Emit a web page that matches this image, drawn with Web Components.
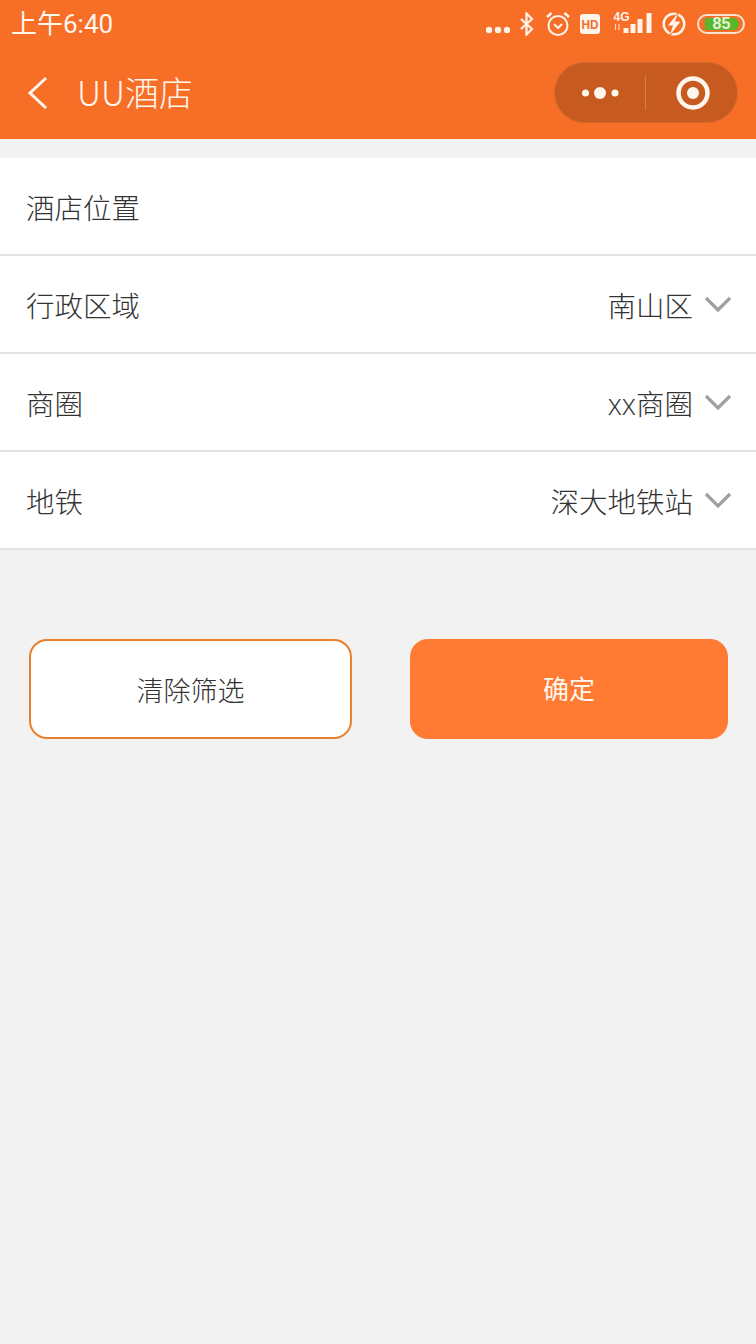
<!DOCTYPE html>
<html lang="zh"><head><meta charset="utf-8"><title>UU酒店</title>
<style>
html,body{margin:0;padding:0;background:#f2f2f2;}
body{width:756px;height:1344px;overflow:hidden;font-family:"Roboto","Noto Sans CJK SC",sans-serif;}
</style></head><body>
<app-header title="UU酒店" time="上午6:40"></app-header>
<filter-list>
  <filter-row label="酒店位置"></filter-row>
  <filter-row label="行政区域" value="南山区"></filter-row>
  <filter-row label="商圈" value="xx商圈"></filter-row>
  <filter-row label="地铁" value="深大地铁站"></filter-row>
</filter-list>
<action-bar>
  <action-button kind="outline">清除筛选</action-button>
  <action-button kind="primary">确定</action-button>
</action-bar>
<script>
const def=(name,html)=>customElements.define(name,class extends HTMLElement{
  connectedCallback(){
    if(this.shadowRoot)return;
    const r=this.attachShadow({mode:"open"});
    r.innerHTML=html(this);
  }
});
def("status-icons",()=>`<style>
:host{display:flex;align-items:center;height:48px}
svg{display:block;flex:none}
.bat{position:relative;box-sizing:border-box;width:48px;height:20px;border:2px solid #fde3d0;border-radius:10px;margin-left:11px;display:flex;align-items:center;overflow:hidden}
.fill{position:absolute;left:6px;top:2px;bottom:2px;width:34px;background:#58b62c;border-radius:3px 7px 7px 3px}
.num{position:relative;width:100%;text-align:center;font:700 16px/16px "Liberation Sans",sans-serif;color:#e6f7d8;padding-left:1px}
</style>
<svg width="24" height="8" viewBox="0 0 24 8" style="margin-top:11px"><g fill="#fff3ea"><circle cx="3" cy="4" r="3.200"/><circle cx="12" cy="4" r="3.200"/><circle cx="21" cy="4" r="3.200"/></g></svg>
<svg width="16" height="24" viewBox="0 0 16 24" style="margin-left:9px"><path d="M2 7l11 10-5.500 5.500V1.500L13 7 2 17" fill="none" stroke="#fff3ea" stroke-width="2.200"/></svg>
<svg width="26" height="26" viewBox="0 0 26 26" style="margin-left:10px"><g fill="none" stroke="#fff3ea" stroke-width="2"><circle cx="13" cy="14.500" r="9.500"/><path d="M9 13l4 4 4-4"/><path d="M2 6l4.500-4M24 6l-4.500-4" stroke-width="2.600"/></g></svg>
<svg width="20" height="20" viewBox="0 0 20 20" style="margin-left:9px"><rect width="20" height="20" rx="3" fill="#fff3ea"/><text x="10" y="15" text-anchor="middle" font-family="Liberation Sans" font-weight="700" font-size="13.500" textLength="17" lengthAdjust="spacingAndGlyphs" fill="#f07030">HD</text></svg>
<svg width="40" height="30" viewBox="0 -3 40 30" style="margin-left:12px"><g fill="#fff3ea"><rect x="11.500" y="16" width="5" height="5"/><rect x="18.500" y="12" width="5" height="9"/><rect x="25.500" y="7" width="5" height="14"/><rect x="34.500" y="1" width="5" height="20"/></g><text x="1.500" y="9" font-family="Liberation Sans" font-weight="700" font-size="12" fill="#fff3ea">4G</text><path d="M3.500 12v6M7 12v6" stroke="#fdd7bd" stroke-width="1.200"/></svg>
<svg width="24" height="24" viewBox="0 0 24 24" style="margin-left:10px"><circle cx="12" cy="12" r="10.300" fill="none" stroke="#fff3ea" stroke-width="2.400"/><path d="M16 1L6 13.500h5L8 23l10.500-13.500H13z" fill="#fff3ea" stroke="#f76e27" stroke-width="1.500" paint-order="stroke"/></svg>
<div class="bat"><div class="fill"></div><div class="num">85</div></div>`);
def("app-header",(h)=>`<style>
:host{display:block;background:#f76e27;height:139px;color:#fff6ee}
.status{height:48px;display:flex;align-items:center;justify-content:space-between;padding:0 11px 0 11px}
.time{font-size:26px;line-height:48px;height:48px;font-family:"Roboto","Noto Sans CJK SC",sans-serif;font-weight:400}
.nav{box-sizing:border-box;height:91px;display:flex;align-items:center;padding:0 18px 2px 26px}
.back{flex:none;display:block}
.title{font-size:34px;font-family:"Noto Sans CJK SC",sans-serif;font-weight:300;margin-left:29px;flex:1;line-height:87px;height:89px}
</style>
<div class="status"><span class="time">${h.getAttribute("time")}</span><status-icons></status-icons></div>
<div class="nav"><svg class="back" width="22" height="34" viewBox="0 0 22 34"><path d="M20 2L4 17l16 15" fill="none" stroke="#fff6ee" stroke-width="3"/></svg><span class="title">${h.getAttribute("title")}</span><mini-capsule></mini-capsule></div>`);
def("mini-capsule",()=>`<style>
:host{display:flex;align-items:center;flex:none;box-sizing:border-box;width:184px;height:61px;background:#c65a1f;border-radius:31px;border:1px solid #d3692e}
.l,.r{flex:1;display:flex;align-items:center;justify-content:center}
.l{padding-left:1px}.r{padding-left:2px}
.d{width:1px;height:35px;background:#db7a42}
svg{display:block}
</style>
<div class="l"><svg width="38" height="14" viewBox="0 0 38 14"><g fill="#fff6ee"><circle cx="3.500" cy="7" r="3.500"/><circle cx="18" cy="7" r="6"/><circle cx="33" cy="7" r="3.500"/></g></svg></div>
<div class="d"></div>
<div class="r"><svg width="36" height="36" viewBox="0 0 36 36"><circle cx="18" cy="18" r="14.500" fill="none" stroke="#fff6ee" stroke-width="4.500"/><circle cx="18" cy="18" r="6" fill="#fff6ee"/></svg></div>`);
def("filter-list",()=>`<style>:host{display:block;margin-top:19px}</style><slot></slot>`);
def("filter-row",(h)=>{const v=h.getAttribute("value");return `<style>
:host{display:flex;align-items:center;justify-content:space-between;box-sizing:border-box;height:98px;background:#fff;border-bottom:2px solid #e2e2e2;padding:0 24px 0 26px;font-size:28.500px;color:#333;font-family:"Open Sans","Noto Sans CJK SC",sans-serif;font-weight:300}
.v{display:flex;align-items:center}
.t{line-height:40px;padding-top:3px}
svg{display:block;margin-left:11px;margin-top:0}
</style><span class="t">${h.getAttribute("label")}</span>${v?`<span class="v"><span class="t">${v}</span><svg width="28" height="17" viewBox="0 0 28 17"><path d="M2 2l12 12L26 2" fill="none" stroke="#a0a0a0" stroke-width="3.200"/></svg></span>`:""}`});
def("action-bar",()=>`<style>:host{display:flex;justify-content:space-between;padding:89px 28px 0 29px}</style><slot></slot>`);
def("action-button",(h)=>{const p=h.getAttribute("kind")==="primary";return `<style>
:host{display:flex;align-items:center;justify-content:center;box-sizing:border-box;height:100px;border-radius:18px;font-family:"Noto Sans CJK SC",sans-serif;
${p?"width:318px;background:#ff7a32;color:#fff6ee;font-size:26px;font-weight:400;padding-bottom:3px":"width:323px;background:#fff;border:2px solid #e8812f;color:#333;font-size:27px;font-weight:300"}}
</style><slot></slot>`});
</script>
</body></html>
